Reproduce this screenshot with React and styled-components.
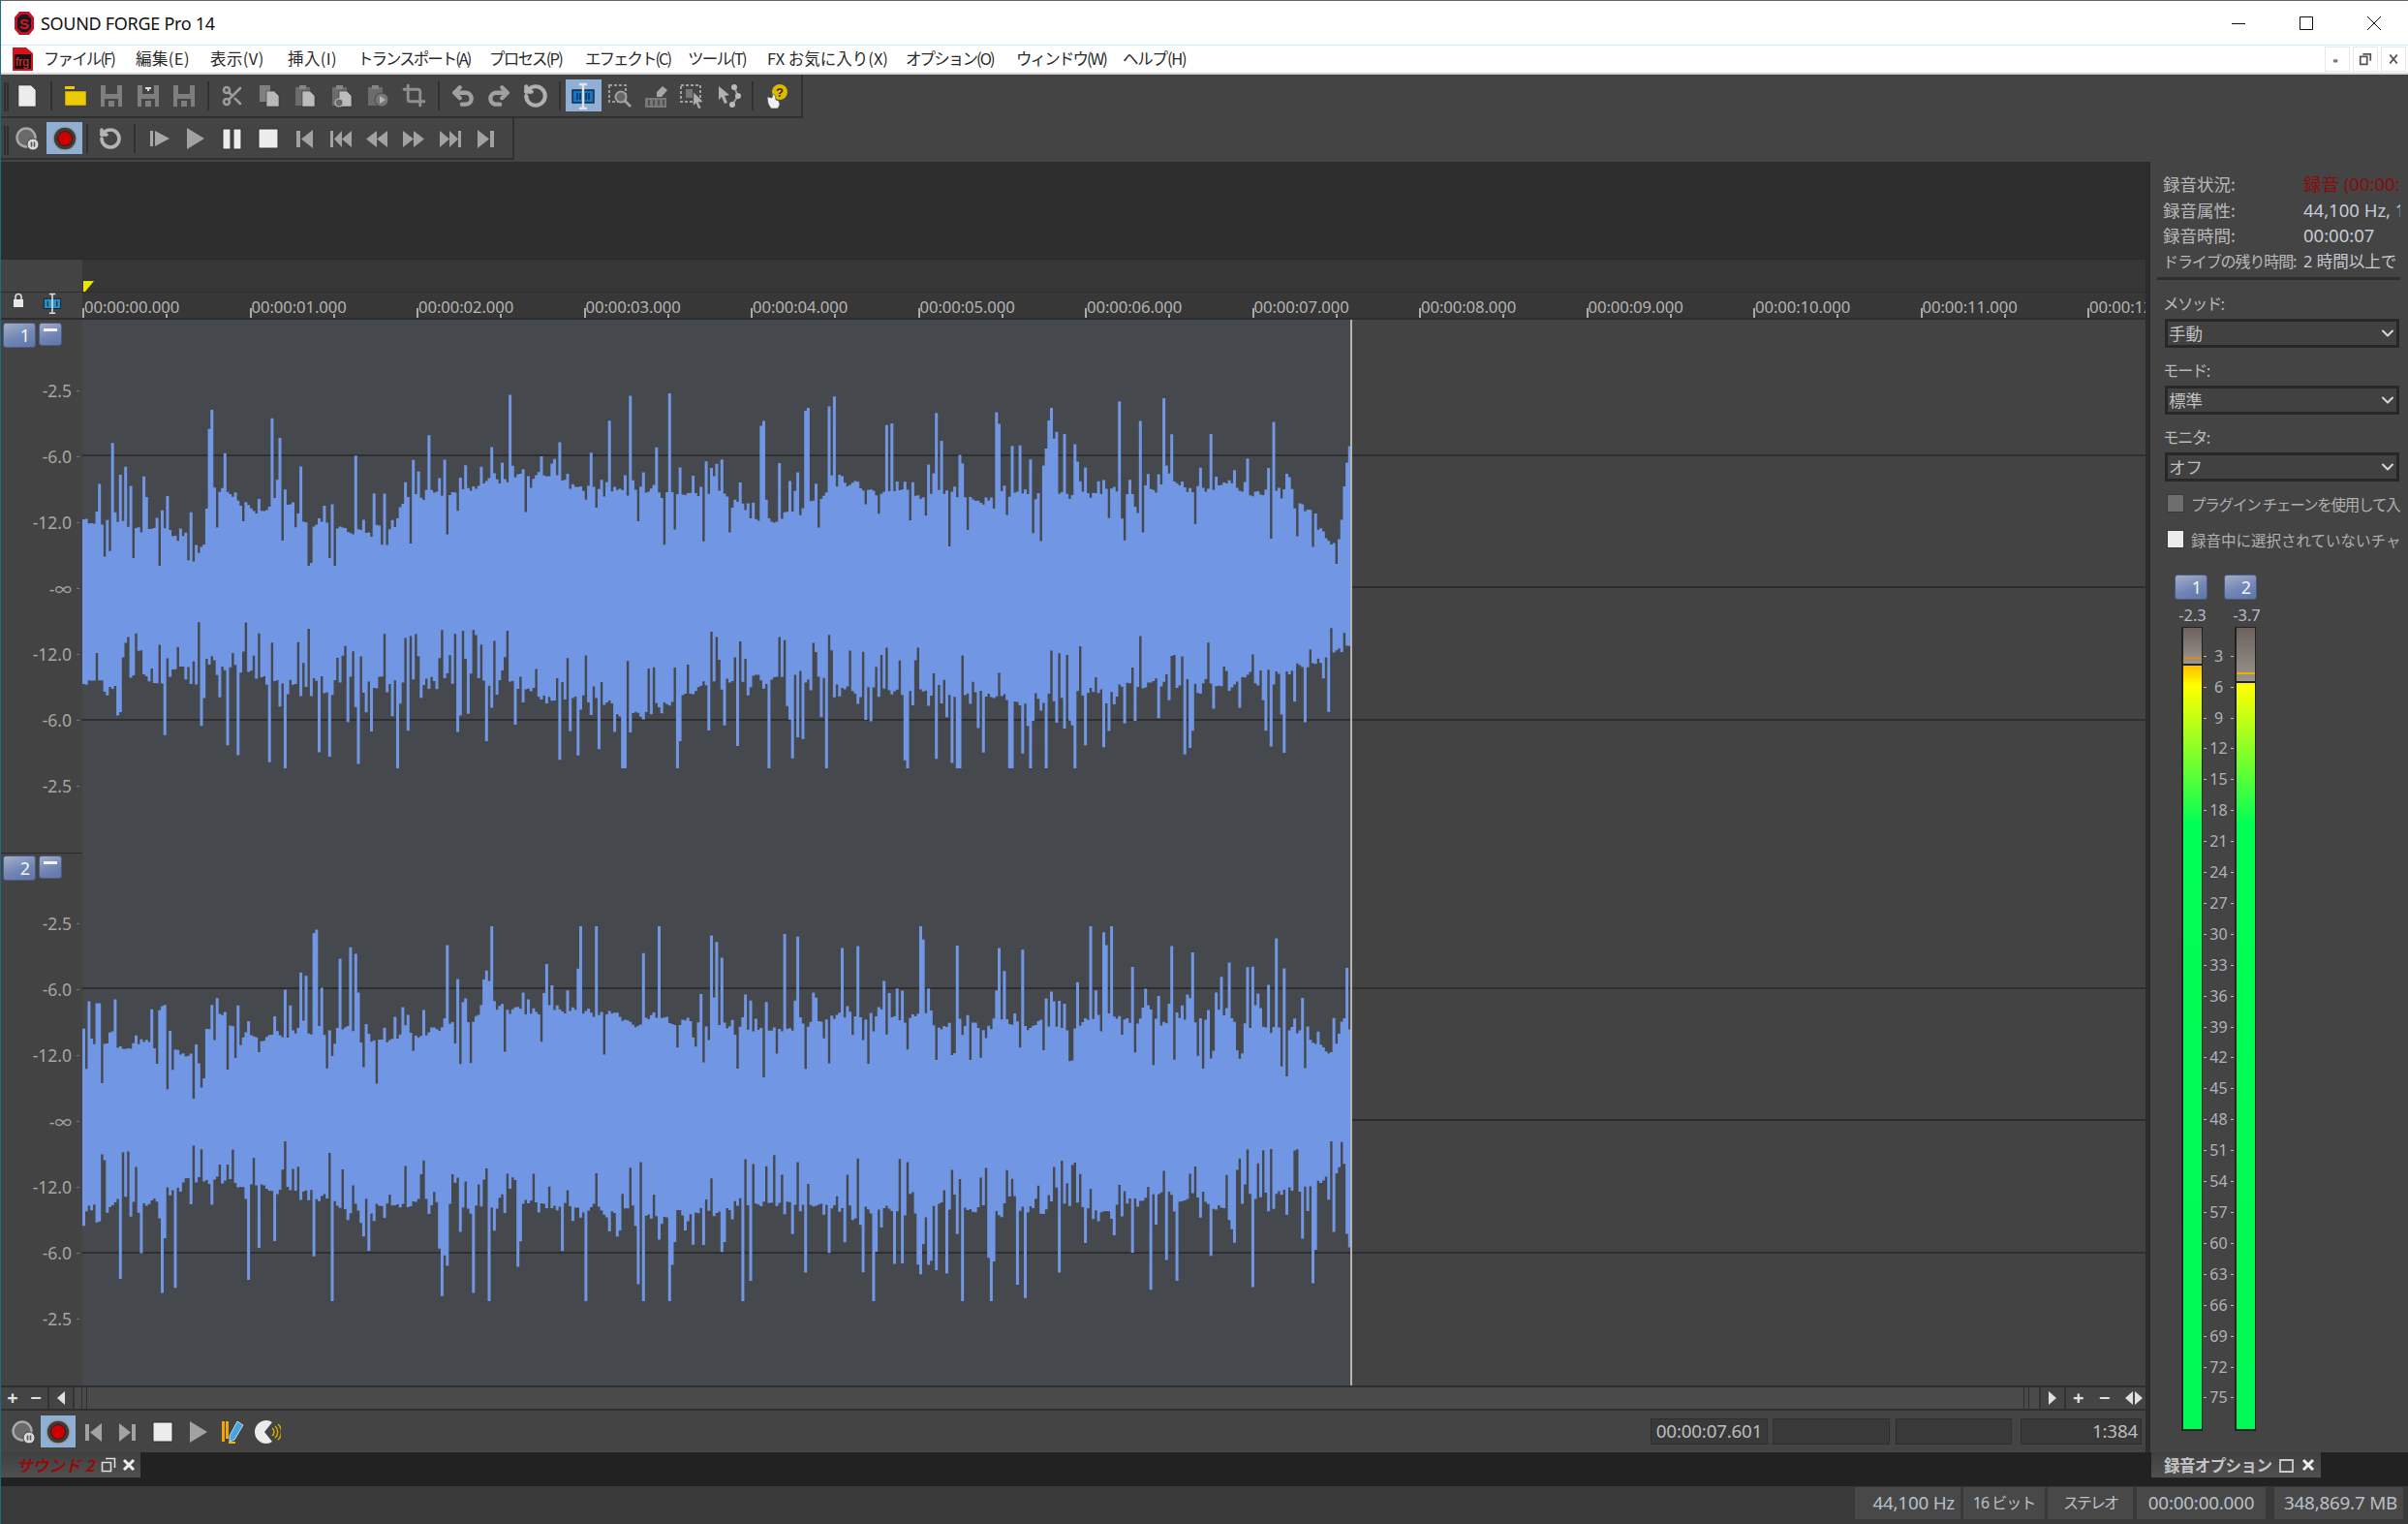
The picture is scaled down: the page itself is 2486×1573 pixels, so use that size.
import React, { useMemo } from "react";
import styled, { createGlobalStyle } from "styled-components";
import { Undo2, Redo2, RotateCcw, Crop, Scissors, ChevronDown } from "lucide-react";

const SANS = `"Noto Sans", "Noto Sans CJK JP", sans-serif`;
const JP = `"Noto Sans CJK JP", "Noto Sans", sans-serif`;

const GlobalStyle = createGlobalStyle`
  html, body { margin: 0; padding: 0; background: #444; }
  body { width: 2486px; height: 1573px; overflow: hidden; font-family: ${SANS}; }
  * { box-sizing: border-box; }
`;

const Window = styled.div`
  width: 2486px;
  height: 1573px;
  display: flex;
  flex-direction: column;
  border-left: 1px solid #1f6b86;
  background: #444;
  overflow: hidden;
`;

const TitleBar = styled.div`
  height: 47px;
  flex: none;
  background: #fff;
  border-top: 1px solid #666;
  border-bottom: 1px solid #cfe6f5;
  display: flex;
  align-items: center;
  padding-left: 12px;
  font: 18px ${SANS};
  color: #111;
`;

const TitleText = styled.span`
  margin-left: 5px;
  letter-spacing: -0.3px;
  flex: 1;
`;

const WinButton = styled.div`
  width: 70px;
  display: flex;
  justify-content: center;
`;

const WinControls = styled.div`
  display: flex;
`;

const MenuBar = styled.div`
  height: 30px;
  flex: none;
  background: #fff;
  border-bottom: 2px solid #d8d8d8;
  display: flex;
  align-items: center;
  padding-left: 12px;
`;

const MenuLogo = styled.div`
  width: 32px;
  flex: none;
`;

const MenuItem = styled.span`
  width: ${(p) => p.$w}px;
  flex: none;
  font: 16.5px ${JP};
  letter-spacing: ${(p) => p.$ls || 0}px;
  color: #2a2a2a;
  white-space: nowrap;
  padding-bottom: 2px;
`;

const MdiButtons = styled.div`
  margin-left: auto;
  display: flex;
  gap: 3px;
  padding-right: 2px;
`;

const MdiButton = styled.div`
  width: 26px;
  height: 26px;
  border: 1px solid #e8e8e8;
  display: flex;
  align-items: center;
  justify-content: center;
`;

const Toolbars = styled.div`
  height: 90px;
  flex: none;
  display: flex;
  flex-direction: column;
  background: #444;
`;

const ToolRow = styled.div`
  width: ${(p) => p.$w}px;
  height: ${(p) => p.$h}px;
  display: flex;
  align-items: center;
  border-right: 2px solid #303030;
  border-bottom: 2px solid #303030;
`;

const Grip = styled.div`
  width: 8.2px;
  height: 100%;
  flex: none;
  &::before {
    content: "";
    display: block;
    margin: 8px 0 0 6px;
    width: 2px;
    height: 30px;
    background: #2e2e2e;
    box-shadow: -3px 0 0 #2e2e2e;
  }
`;

const ToolButton = styled.div`
  width: 37.6px;
  height: 33px;
  flex: none;
  display: flex;
  align-items: center;
  justify-content: center;
  background: ${(p) => (p.$active ? "#8fb0d4" : "transparent")};
  margin-left: ${(p) => p.$ml || 0}px;
`;

const ToolSep = styled.div`
  width: ${(p) => p.$w || 12}px;
  height: 30px;
  flex: none;
  display: flex;
  justify-content: center;
  &::before {
    content: "";
    width: 2px;
    background: #303030;
  }
`;

const Workspace = styled.div`
  flex: 1;
  display: flex;
  min-height: 0;
`;

const Editor = styled.div`
  width: 2214px;
  flex: none;
  display: flex;
  flex-direction: column;
`;

const Divider = styled.div`
  width: 5px;
  flex: none;
  background: #2c2c2c;
`;

const TrackTop = styled.div`
  height: 100px;
  flex: none;
  background: #2e2e2e;
`;

const MarkerRow = styled.div`
  height: 35px;
  flex: none;
  display: flex;
  background: #363636;
  border-top: 1px solid #2a2a2a;
  border-bottom: 1px solid #2e2e2e;
`;

const CornerCell = styled.div`
  width: 84px;
  flex: none;
  background: #434343;
`;

const MarkerTrack = styled.div`
  flex: 1;
  display: flex;
  align-items: flex-end;
`;

const RulerRow = styled.div`
  height: 28px;
  flex: none;
  display: flex;
  background: #373737;
  border-bottom: 2px solid #2e2e2e;
`;

const RulerCorner = styled(CornerCell)`
  display: flex;
  align-items: flex-start;
  padding: 0 0 0 11px;
  gap: 17px;
`;

const Ruler = styled.div`
  flex: 1;
  min-width: 0;
  display: flex;
  overflow: hidden;
`;

const RulerCell = styled.div`
  flex: 0 0 172.5px;
  height: 100%;
  position: relative;
  padding: 4px 0 0 2px;
  font: 16.7px ${SANS};
  letter-spacing: -0.1px;
  color: #b4b4b4;
  line-height: 22px;
  white-space: nowrap;
  &::before, &::after {
    content: "";
    position: absolute;
    bottom: 0;
    width: 2px;
    background: #aaa;
  }
  &::before { left: 0; height: 10px; }
  &::after { left: 86px; height: 4px; }
  &:last-child {
    flex: 1 1 0;
    min-width: 0;
    overflow: hidden;
  }
`;

const Channels = styled.div`
  height: 1100px;
  flex: none;
  display: flex;
  flex-direction: column;
`;

const Channel = styled.div`
  height: 550px;
  flex: none;
  display: flex;
`;

const ChannelSide = styled.div`
  width: 84px;
  flex: none;
  background: #434343;
  display: flex;
  flex-direction: column;
`;

const ChannelHead = styled.div`
  height: 39px;
  flex: none;
  display: flex;
  padding: 2px 0 0 2px;
  gap: 3px;
  align-items: flex-start;
  border-top: 1px solid ${(p) => (p.$second ? "#2a2a2a" : "transparent")};
`;

const blueButton = `
  background: linear-gradient(160deg, #a3aec9 0%, #7286b6 55%, #5f74a8 100%);
  border: 1px solid #4e5b80;
  border-radius: 3px;
`;

const ChannelButton = styled.div`
  ${blueButton}
  width: 34px;
  height: 26px;
  color: #f2f4fa;
  font: 18px/24px ${SANS};
  text-align: right;
  padding-right: 5px;
`;

const MinusButton = styled.div`
  ${blueButton}
  width: 24px;
  height: 24px;
  padding: 5px 4px 0;
  &::before {
    content: "";
    display: block;
    height: 3px;
    background: #f4f4f4;
  }
`;

const DbRow = styled.div`
  height: 68px;
  flex: none;
  display: flex;
  align-items: center;
  justify-content: flex-end;
  padding-right: 3px;
  font: 17.5px ${SANS};
  color: #a8a6a0;
  &::after {
    content: "";
    width: 3px;
    height: 1px;
    background: #777;
    margin-left: 5px;
  }
`;

const WaveBox = styled.div`
  flex: 1;
  min-width: 0;
`;

const ScrollRow = styled.div`
  height: 26px;
  flex: none;
  display: flex;
  align-items: stretch;
  background: #4a4a4a;
  border-top: 2px solid #2f2f2f;
  border-bottom: 2px solid #2f2f2f;
`;

const ScrollCell = styled.div`
  width: ${(p) => p.$w}px;
  flex: none;
  display: flex;
  align-items: center;
  justify-content: ${(p) => (p.$spread ? "space-between" : "space-around")};
  padding: ${(p) => (p.$spread ? "0 3px 0 7px" : "0")};
  background: #444;
  border-right: ${(p) => (p.$right ? "none" : "2px solid #333")};
  border-left: ${(p) => (p.$right ? "2px solid #333" : "none")};
  color: #e0e0e0;
  font: bold 20px/1 ${SANS};
`;

const ScrollTrack = styled.div`
  flex: 1;
  display: flex;
  justify-content: space-between;
  padding: 0 10px 0 7px;
  &::before, &::after {
    content: "";
    width: 4px;
    border-left: 1px solid #2e2e2e;
    border-right: 1px solid #2e2e2e;
  }
`;

const TransportRow = styled.div`
  height: 43px;
  flex: none;
  display: flex;
  align-items: center;
  padding: 0 4px 0 5px;
  background: #444;
`;

const TransportButton = styled.div`
  width: 36px;
  height: 33px;
  flex: none;
  display: flex;
  align-items: center;
  justify-content: center;
  background: ${(p) => (p.$active ? "#8fb0d4" : "transparent")};
`;

const Fields = styled.div`
  margin-left: auto;
  display: flex;
`;

const Field = styled.div`
  width: ${(p) => p.$w}px;
  height: 27px;
  margin-left: ${(p) => p.$ml || 0}px;
  background: #393939;
  border: 1px solid #2f2f2f;
  font: 18.8px/25px ${SANS};
  color: #bdbdbd;
  text-align: ${(p) => (p.$left ? "center" : "right")};
  padding: 0 3px;
  letter-spacing: -0.2px;
  white-space: nowrap;
  overflow: hidden;
`;

const Panel = styled.div`
  flex: 1;
  min-width: 0;
  display: flex;
  flex-direction: column;
  padding: 9px 8px 0 7px;
  background: #444;
  color: #b9b9b9;
  font: 17.5px ${JP};
  overflow: hidden;
`;

const InfoRow = styled.div`
  height: 26.7px;
  flex: none;
  display: flex;
  align-items: center;
  padding-left: 6px;
  white-space: nowrap;
  overflow: hidden;
`;

const InfoLabel = styled.span`
  flex: none;
  width: ${(p) => p.$w || 145}px;
  font-size: ${(p) => p.$fs || 17.5}px;
  letter-spacing: ${(p) => p.$ls || 0}px;
`;

const InfoValue = styled.span`
  color: ${(p) => (p.$red ? "#8a0c0c" : "#c6ccd6")};
  font-family: ${SANS};
  font-size: ${(p) => p.$fs || 18.5}px;
`;

const PanelRule = styled.div`
  height: 3px;
  flex: none;
  margin-top: 3px;
  background: #2e2e2e;
`;

const FieldGroup = styled.div`
  flex: none;
  margin-top: ${(p) => p.$mt || 10}px;
`;

const FieldLabel = styled.div`
  height: 26px;
  padding: 0 6px;
  line-height: 26px;
  font-size: 16.5px;
  letter-spacing: -1.6px;
`;

const SelectBox = styled.div`
  height: 30px;
  margin: 3px 1px 0 8px;
  border: 3px solid #272727;
  background: #414141;
  display: flex;
  align-items: center;
  justify-content: space-between;
  padding: 0 0 0 1px;
  color: #c0c0c0;
  svg { margin-right: -1px; }
`;

const CheckRow = styled.div`
  height: 20px;
  flex: none;
  margin-top: ${(p) => p.$mt}px;
  padding-left: 10px;
  display: flex;
  align-items: center;
  gap: 7px;
  white-space: nowrap;
  font-size: 15.5px;
  letter-spacing: ${(p) => p.$ls || 0}px;
  color: #b0b0b0;
  overflow: hidden;
`;

const CheckBox = styled.div`
  width: 18px;
  height: 19px;
  flex: none;
  background: ${(p) => (p.$on ? "#ececec" : "#6e6e6e")};
  border: 1px solid #3a3a3a;
`;

const MeterButtons = styled.div`
  flex: none;
  display: flex;
  gap: 17px;
  margin: 26px 0 0 18px;
`;

const MeterValues = styled.div`
  flex: none;
  height: 28px;
  margin-left: 18px;
  padding-top: 4px;
  display: flex;
  gap: 19px;
  align-items: center;
`;

const MeterValue = styled.span`
  width: 37px;
  text-align: center;
  font: 16.5px ${SANS};
  color: #b4bcc8;
`;

const Meters = styled.div`
  flex: none;
  display: flex;
  margin-left: 25px;
`;

const Meter = styled.div`
  width: 22px;
  height: 830px;
  flex: none;
  display: flex;
  flex-direction: column;
  background: #222;
  padding: 1px 1px 2px 2px;
`;

const PeakHold = styled.div`
  height: ${(p) => p.$h}px;
  flex: none;
  background: linear-gradient(#6c615e, #9a968c);
  padding-top: ${(p) => p.$line}px;
  border-bottom: 2px solid #222;
  &::before {
    content: "";
    display: block;
    height: 2px;
    background: ${(p) => p.$color};
  }
`;

const MeterFill = styled.div`
  flex: 1;
  background: linear-gradient(
    to top,
    #00f954 0,
    #00ff55 624px,
    #ffff00 767px,
    #ffb400 791px
  );
`;

const MeterScale = styled.div`
  width: 33px;
  flex: none;
  padding-top: 14px;
  display: flex;
  flex-direction: column;
`;

const ScaleRow = styled.div`
  height: 31.92px;
  flex: none;
  display: flex;
  align-items: center;
  justify-content: center;
  font: 16px ${SANS};
  color: #b0b4ba;
  position: relative;
  &::before, &::after {
    content: "";
    position: absolute;
    top: 50%;
    width: 3px;
    height: 1px;
    background: #bbb;
  }
  &::before { left: 1px; }
  &::after { right: 1px; }
`;

const TabBar = styled.div`
  height: 35px;
  flex: none;
  background: #222;
  display: flex;
  align-items: flex-start;
  justify-content: space-between;
  padding-right: 90px;
`;

const Tab = styled.div`
  height: 26px;
  width: ${(p) => p.$w}px;
  background: linear-gradient(#404040, #505050);
  display: flex;
  align-items: center;
  gap: ${(p) => p.$gap}px;
  padding-left: ${(p) => p.$pl}px;
  white-space: nowrap;
`;

const TabName = styled.span`
  font: ${(p) => (p.$red ? "italic bold" : "bold")} 16.5px/26px ${JP};
  color: ${(p) => (p.$red ? "#960a0a" : "#c4c4c4")};
  letter-spacing: ${(p) => (p.$red ? 0.2 : -0.6)}px;
  flex: none;
`;

const StatusBar = styled.div`
  height: 39px;
  flex: none;
  background: #393939;
  display: flex;
  justify-content: flex-end;
  align-items: flex-start;
  padding: 1px 5px 0 0;
`;

const StatusCell = styled.div`
  width: ${(p) => p.$w}px;
  height: 33px;
  margin-left: ${(p) => p.$ml || 3}px;
  background: #484848;
  font: ${(p) => p.$fs || 18.8}px/33px ${SANS};
  color: #b9c0c8;
  text-align: ${(p) => (p.$center ? "center" : "right")};
  padding-right: ${(p) => (p.$center ? 0 : 6)}px;
  letter-spacing: ${(p) => p.$ls ?? -0.2}px;
  white-space: nowrap;
`;

// seeded random so the wave form stays the same between runs
const rng = (seed) => () => {
  seed = (seed + 0x6d2b79f5) | 0;
  let t = Math.imul(seed ^ (seed >>> 15), 1 | seed);
  t = (t + Math.imul(t ^ (t >>> 7), 61 | t)) ^ t;
  return ((t ^ (t >>> 14)) >>> 0) / 4294967296;
};

const lerp = (keys, x) => {
  for (let i = 1; i < keys.length; i++) {
    if (x <= keys[i][0]) {
      const [x0, y0] = keys[i - 1];
      const [x1, y1] = keys[i];
      return y0 + ((y1 - y0) * (x - x0)) / (x1 - x0);
    }
  }
  return keys[keys.length - 1][1];
};

// envelope keys read off the picture: [x, edge y]
const ENVELOPES = [
  {
    seed: 11,
    center: 382,
    up: [[54, 340], [90, 345], [125, 352], [131, 364], [135, 318], [170, 335], [182, 325], [200, 342], [235, 345], [252, 355], [262, 330], [300, 320], [340, 312], [380, 320], [420, 325], [470, 325], [500, 342], [540, 320], [600, 325], [650, 325], [700, 325], [750, 320], [800, 320], [840, 322], [866, 355], [872, 350], [877, 295]],
    down: [[54, 442], [100, 440], [130, 425], [170, 438], [220, 442], [300, 438], [380, 452], [420, 458], [470, 438], [550, 442], [600, 448], [650, 452], [700, 448], [750, 442], [800, 442], [860, 428], [877, 418]],
  },
  {
    seed: 29,
    center: 730,
    up: [[54, 682], [90, 682], [125, 690], [131, 718], [137, 665], [170, 678], [200, 672], [250, 682], [300, 668], [340, 662], [380, 662], [420, 668], [470, 672], [500, 678], [540, 664], [600, 668], [650, 672], [700, 672], [750, 668], [800, 668], [840, 672], [868, 692], [877, 645]],
    down: [[54, 784], [100, 780], [130, 762], [160, 772], [230, 782], [300, 782], [350, 782], [420, 788], [470, 786], [500, 778], [540, 786], [600, 786], [650, 786], [700, 782], [750, 778], [800, 782], [850, 772], [877, 756]],
  },
];

const K = 1.5855;
const WAVE_W = 1310;
const MID = 276;

const buildWave = ({ seed, center, up, down }) => {
  const r = rng(seed);
  const step = 2.7;
  let d = "";
  let drift = 0;
  for (let x = 0; x < WAVE_W - 1; x += step) {
    const px = (x + 85) / K;
    drift = drift * 0.7 + (r() - 0.5) * 10;
    const edge = (amp, limit, notchChance) => {
      let a = amp * 1.05 + drift;
      const roll = r();
      if (roll < 0.3) a += 8 + Math.pow(r(), 2) * 95;
      else if (roll < 0.3 + notchChance) a -= 10 + r() * 42;
      return Math.min(Math.max(a, 22), limit);
    };
    const top = edge((center - lerp(up, px)) * K, 200, 0.13);
    const bottom = edge((lerp(down, px) - center) * K, 187, 0.2);
    d += `M${x.toFixed(1)} ${(MID - top).toFixed(1)}h${(step + 0.3).toFixed(1)}V${(MID + bottom).toFixed(1)}h-${(step + 0.3).toFixed(1)}Z`;
  }
  return d;
};

const Wave = ({ index }) => {
  const d = useMemo(() => buildWave(ENVELOPES[index]), [index]);
  return (
    <svg width="2130" height="550" viewBox="0 0 2130 550" style={{ display: "block" }}>
      <rect width="2130" height="550" fill="#434343" />
      <rect width={WAVE_W} height="550" fill="#45484c" />
      {[139, 412].map((y) => (
        <rect key={y} y={y} width="2130" height="2" fill="#2f2f30" />
      ))}
      <rect x={WAVE_W} y={MID - 1} width="820" height="2" fill="#2c2c2c" />
      <path d={d} fill="#7096e4" />
      <rect x={WAVE_W - 1} width="2" height="550" fill="#b4b4b4" />
    </svg>
  );
};

const G = "#a2a2a2";
const W = "#ececec";

const Svg = ({ s = 28, children }) => (
  <svg width={s} height={s} viewBox="0 0 28 28">{children}</svg>
);

const Doc = ({ x = 0, y = 0, w = 14, h = 18, fill = W }) => (
  <path d={`M${x} ${y}h${w - 5}l5 5v${h - 5}h-${w}z`} fill={fill} stroke="#333" strokeWidth="0.6" />
);

const Floppy = ({ q }) => (
  <g>
    <path d="M3 3h22v22H3z" fill="#7e7e7e" />
    <path d="M8 3h12v9H8zM7 17h14v8H7z" fill="#444" />
    <path d="M11 19h6v6h-6z" fill="#7e7e7e" />
    {q && <path d="M11 5h6v2h-2v2h-2V7h-2z" fill="#ddd" />}
  </g>
);

const Clip = ({ children }) => (
  <g>
    <path d="M4 5h15v19H4z" fill="#6c6c6c" />
    <path d="M8 3h7v4H8z" fill="#868686" />
    {children}
  </g>
);

const ICONS = {
  newDoc: <Svg><Doc x={5} y={3} w={18} h={22} /></Svg>,
  open: (
    <Svg>
      <path d="M3 4h10v3H3z" fill="#eecb00" />
      <path d="M3 9h22v15H3z" fill="#eecb00" stroke="#3a3a3a" strokeWidth="0.5" />
    </Svg>
  ),
  save: <Svg><Floppy /></Svg>,
  saveAs: <Svg><Floppy q /></Svg>,
  cut: <Scissors size={24} color="#9c9c9c" strokeWidth={2.6} />,
  copy: (
    <Svg>
      <path d="M4 3h11v17H4z" fill="#808080" />
      <Doc x={11} y={9} w={13} h={16} fill="#b8b8b8" />
    </Svg>
  ),
  paste: <Svg><Clip><Doc x={11} y={9} w={13} h={16} fill="#bcbcbc" /></Clip></Svg>,
  pasteMix: (
    <Svg>
      <Clip><Doc x={11} y={9} w={13} h={16} fill="#bcbcbc" /></Clip>
      <circle cx="11" cy="21" r="4" fill="#666" stroke="#b8b8b8" strokeWidth="1.2" />
    </Svg>
  ),
  pastePlay: (
    <Svg>
      <Clip />
      <circle cx="18" cy="18" r="7" fill="#777" stroke="#444" />
      <path d="M16 14l6 4-6 4z" fill="#b4b4b4" />
    </Svg>
  ),
  crop: <Crop size={25} color="#8e8e8e" strokeWidth={2.8} />,
  undo: <Undo2 size={26} color="#a0a0a0" strokeWidth={4} />,
  redo: <Redo2 size={26} color="#a0a0a0" strokeWidth={4} />,
  undoAll: <RotateCcw size={26} color="#b0b0b0" strokeWidth={3.8} />,
  fit: (
    <Svg>
      <path d="M3 8h22v13H3z" fill="#1676c2" stroke="#0e2a44" strokeWidth="1.4" />
      <path d="M8 11v7M11 11v7M17 11v7M20 11v7" stroke="#0e2a44" strokeWidth="1.4" />
      <path d="M10 2h3l1 1 1-1h3M10 27h3l1-1 1 1h3M14 3v23" stroke="#e4e4e4" strokeWidth="2.4" fill="none" />
    </Svg>
  ),
  zoomSel: (
    <Svg>
      <path d="M3 3h17v17H3z" fill="none" stroke="#9c9c9c" strokeWidth="2" strokeDasharray="3 2" />
      <circle cx="15" cy="15" r="5.500" fill="#666" stroke="#a0a0a0" strokeWidth="2" />
      <path d="M19 19l6 6" stroke="#a0a0a0" strokeWidth="2.600" />
    </Svg>
  ),
  eraseBars: (
    <Svg>
      <path d="M3 16h22v10H3z" fill="#777" />
      <path d="M7 18v6M12 18v6M17 18v6M22 18v6" stroke="#444" strokeWidth="1.500" />
      <path d="M15 10l6-6 5 4-6 7h-5z" fill="#a6a6a6" />
    </Svg>
  ),
  selCursor: (
    <Svg>
      <path d="M2 3h20v17H2z" fill="none" stroke="#a0a0a0" strokeWidth="2" strokeDasharray="3 2" />
      <path d="M7 7h7v9H7z" fill="#777" />
      <path d="M15 10l10 10-5 .5 3 6-3 1-2.500-6-3 3z" fill="#b0b0b0" stroke="#444" strokeWidth="0.6" />
    </Svg>
  ),
  nodes: (
    <Svg>
      <path d="M3 4l11 9-5 1 3 7-3 1-3-7-3 3z" fill="#b0b0b0" />
      <path d="M19 5l4 9-6 9" fill="none" stroke="#9a9a9a" strokeWidth="2" />
      <circle cx="19" cy="5" r="3" fill="#bbb" />
      <circle cx="23" cy="14" r="3" fill="#bbb" />
      <circle cx="17" cy="23" r="3" fill="#bbb" />
    </Svg>
  ),
  help: (
    <Svg>
      <circle cx="17" cy="10" r="8" fill="#e0b800" />
      <text x="17" y="15" fontSize="13" fontWeight="700" textAnchor="middle" fill="#3a3000" fontFamily="Liberation Sans, sans-serif">?</text>
      <path d="M4 15l5 1 1-4 2 1 1 5 3 1 1 4-2 4H8l-3-5z" fill="#efefef" stroke="#444" strokeWidth="0.6" />
    </Svg>
  ),
  recPause: (
    <Svg>
      <circle cx="13" cy="13" r="9.500" fill="#6a6a6a" stroke="#a8a8a8" strokeWidth="2.400" />
      <circle cx="20" cy="20" r="6" fill="#d8d8d8" stroke="#444" strokeWidth="1" />
      <path d="M17.700 17.500h1.600v5h-1.600zM20.700 17.500h1.600v5h-1.600z" fill="#555" />
    </Svg>
  ),
  record: (
    <Svg>
      <circle cx="14" cy="14" r="12" fill="#3c3c3c" stroke="#9c9c9c" strokeWidth="1.500" />
      <circle cx="14" cy="14" r="7.500" fill="#cc0000" stroke="#111" strokeWidth="0.6" />
    </Svg>
  ),
  loop: <RotateCcw size={24} color="#b4b4b4" strokeWidth={3.6} />,
  playFrom: (
    <Svg>
      <path d="M5 6h3v16H5z" fill="#a8a8a8" />
      <path d="M10 6l15 8-15 8z" fill="#a8a8a8" />
    </Svg>
  ),
  play: <Svg><path d="M6 3l18 11L6 25z" fill={G} /></Svg>,
  pause: <Svg><path d="M5 4h8v21H5zM16 4h8v21h-8z" fill={W} stroke="#2e2e2e" /></Svg>,
  stop: <Svg><path d="M4 4h20v20H4z" fill={W} stroke="#2e2e2e" /></Svg>,
  first: <Svg><path d="M6 6h4v17H6zM23 5v19L11 14.500z" fill={G} /></Svg>,
  rewStart: <Svg><path d="M3 6h3v17H3zM15 6v17L7 14.500zM25 6v17L15 14.500z" fill={G} /></Svg>,
  rewind: <Svg><path d="M14 6v17L3 14.500zM25 6v17L14 14.500z" fill={G} /></Svg>,
  forward: <Svg><path d="M3 6v17l11-8.500zM14 6v17l11-8.500z" fill={G} /></Svg>,
  fwdEnd: <Svg><path d="M3 6v17l10-8.500zM13 6v17l9-8.500zM22 6h3v17h-3z" fill={G} /></Svg>,
  last: <Svg><path d="M5 5v19l12-9.500zM18 6h4v17h-4z" fill={G} /></Svg>,
  marker: (
    <Svg>
      <path d="M3 3h3v21H3zM7 3h3v18H7z" fill="#f1a500" />
      <path d="M19 3l6 4-9 15-5 2 0-6z" fill="#48a4e0" stroke="#eee" strokeWidth="0.8" />
      <path d="M10 24h7v2h-7z" fill="#e0c000" />
    </Svg>
  ),
  speaker: (
    <Svg>
      <path d="M13 2a12 12 0 1 0 0 24a12 12 0 0 0 6-2L11 14l8-10a12 12 0 0 0-6-2z" fill="#ececec" />
      <path d="M19 10a5 5 0 0 1 0 8M22 8a8 8 0 0 1 0 12M25 6a11 11 0 0 1 0 16" fill="none" stroke="#d8b400" strokeWidth="1.400" />
    </Svg>
  ),
};

const Icon = ({ name, active, ml }) => (
  <ToolButton $active={active} $ml={ml}>{ICONS[name]}</ToolButton>
);

const MENU = [
  ["ファイル(F)", 95, -1.9],
  ["編集(E)", 77, 0.4],
  ["表示(V)", 80, 0.4],
  ["挿入(I)", 72, 0.4],
  ["トランスポート(A)", 136, -2],
  ["プロセス(P)", 99, -1.8],
  ["エフェクト(C)", 106, -2],
  ["ツール(T)", 82, -1.8],
  ["FX お気に入り(X)", 143, 0],
  ["オプション(O)", 114, -1.9],
  ["ウィンドウ(W)", 110, -1.9],
  ["ヘルプ(H)", 70, -1.2],
];

// the last label only shows its first characters in the picture
const TIMES = Array.from({ length: 13 }, (_, i) => `00:00:${String(i).padStart(2, "0")}${i < 12 ? ".000" : ""}`);
const DB = ["-2.5", "-6.0", "-12.0", "-∞", "-12.0", "-6.0", "-2.5"];
const LEVELS = Array.from({ length: 25 }, (_, i) => (i + 1) * 3);

const Logo = () => (
  <svg width="24" height="24" viewBox="0 0 24 24">
    <path d="M7 0h10l5 6v12l-5 6H7l-5-6V6z" fill="#c4102a" />
    <path d="M9 3h6l4 4v10l-4 4H9l-4-4V7z" fill="#1a1a1a" />
    <text x="12" y="18" fontSize="15" fontWeight="700" textAnchor="middle" fill="#d8142c" fontFamily="Liberation Sans, sans-serif">S</text>
  </svg>
);

const MenuIcon = () => (
  <svg width="21" height="24" viewBox="0 0 21 24" style={{ display: "block" }}>
    <path d="M0 0h14l7 6v18H0z" fill="#d4121e" />
    <path d="M2 7h17v15H2z" fill="#1a1010" />
    <text x="10" y="19" fontSize="12" textAnchor="middle" fill="#e03030" fontFamily="Liberation Sans, sans-serif">frg</text>
  </svg>
);

const Glyph = ({ d, stroke = "#111", w = 16, fill = "none", sw = 1 }) => (
  <svg width={w} height={w} viewBox="0 0 16 16">
    <path d={d} fill={fill} stroke={stroke} strokeWidth={sw} />
  </svg>
);

const Method = ({ label, value, mt }) => (
  <FieldGroup $mt={mt}>
    <FieldLabel>{label}</FieldLabel>
    <SelectBox>
      {value}
      <ChevronDown size={20} color="#d8d8d8" strokeWidth={2.4} />
    </SelectBox>
  </FieldGroup>
);

export default function App() {
  return (
    <Window>
      <GlobalStyle />
      <TitleBar>
        <Logo />
        <TitleText>SOUND FORGE Pro 14</TitleText>
        <WinControls>
          <WinButton><Glyph d="M1 8.500h14" /></WinButton>
          <WinButton><Glyph d="M1.500 1.500h13v13h-13z" /></WinButton>
          <WinButton><Glyph d="M1 1l14 14M15 1L1 15" /></WinButton>
        </WinControls>
      </TitleBar>
      <MenuBar>
        <MenuLogo><MenuIcon /></MenuLogo>
        {MENU.map(([t, w, ls]) => (
          <MenuItem key={t} $w={w} $ls={ls}>{t}</MenuItem>
        ))}
        <MdiButtons>
          <MdiButton><Glyph w={10} d="M2 9h6v4H2z" stroke="#777" fill="#777" /></MdiButton>
          <MdiButton><Glyph w={14} d="M5 2h9v8M2 5h8v9H2z" stroke="#555" sw={2} /></MdiButton>
          <MdiButton><Glyph w={12} d="M3 2l10 12M13 2L3 14" stroke="#555" sw={2.6} /></MdiButton>
        </MdiButtons>
      </MenuBar>
      <Toolbars>
        <ToolRow $w={828} $h={45}>
          <Grip />
          <Icon name="newDoc" />
          <ToolSep />
          <Icon name="open" />
          <Icon name="save" />
          <Icon name="saveAs" />
          <Icon name="save" />
          <ToolSep />
          <Icon name="cut" />
          <Icon name="copy" />
          <Icon name="paste" />
          <Icon name="pasteMix" />
          <Icon name="pastePlay" />
          <Icon name="crop" />
          <ToolSep />
          <Icon name="undo" />
          <Icon name="redo" />
          <Icon name="undoAll" />
          <ToolSep />
          <Icon name="fit" active />
          <Icon name="zoomSel" />
          <Icon name="eraseBars" />
          <Icon name="selCursor" />
          <Icon name="nodes" />
          <ToolSep />
          <Icon name="help" />
        </ToolRow>
        <ToolRow $w={530} $h={43}>
          <Grip />
          <Icon name="recPause" />
          <Icon name="record" active ml={1} />
          <ToolSep $w={10} />
          <Icon name="loop" />
          <ToolSep />
          <Icon name="playFrom" />
          <Icon name="play" />
          <Icon name="pause" />
          <Icon name="stop" />
          <Icon name="first" />
          <Icon name="rewStart" />
          <Icon name="rewind" />
          <Icon name="forward" />
          <Icon name="fwdEnd" />
          <Icon name="last" />
        </ToolRow>
      </Toolbars>
      <Workspace>
        <Editor>
          <TrackTop />
          <MarkerRow>
            <CornerCell />
            <MarkerTrack>
              <svg width="12" height="12" viewBox="0 0 12 12" style={{ display: "block" }}>
                <path d="M1 1h11L3 12H1z" fill="#e8e800" />
              </svg>
            </MarkerTrack>
          </MarkerRow>
          <RulerRow>
            <RulerCorner>
              <svg width="14" height="16" viewBox="0 0 14 16">
                <path d="M4 7V4.500a3 3 0 0 1 6 0V7" fill="none" stroke="#e0e0e0" strokeWidth="1.600" />
                <path d="M2 7h10v8H2z" fill="#e8e8e8" />
              </svg>
              <svg width="22" height="22" viewBox="0 0 28 28">
                <path d="M3 8h22v13H3z" fill="#2a90c8" stroke="#123" strokeWidth="1.200" />
                <path d="M8 11v7M20 11v7" stroke="#123" strokeWidth="1.400" />
                <path d="M10 2h8M10 27h8M14 2v25" stroke="#ddd" strokeWidth="2" fill="none" />
              </svg>
            </RulerCorner>
            <Ruler>
              {TIMES.map((t) => <RulerCell key={t}>{t}</RulerCell>)}
            </Ruler>
          </RulerRow>
          <Channels>
            {[0, 1].map((i) => (
              <Channel key={i}>
                <ChannelSide>
                  <ChannelHead $second={i === 1}>
                    <ChannelButton>{i + 1}</ChannelButton>
                    <MinusButton />
                  </ChannelHead>
                  {DB.map((v, n) => <DbRow key={n}>{v}</DbRow>)}
                </ChannelSide>
                <WaveBox><Wave index={i} /></WaveBox>
              </Channel>
            ))}
          </Channels>
          <ScrollRow>
            <ScrollCell $w={50}><span>+</span><span>−</span></ScrollCell>
            <ScrollCell $w={26}>
              <svg width="8" height="14" viewBox="0 0 8 14"><path d="M8 0v14L0 7z" fill="#e0e0e0" /></svg>
            </ScrollCell>
            <ScrollTrack />
            <ScrollCell $w={26} $right>
              <svg width="8" height="14" viewBox="0 0 8 14"><path d="M0 0v14l8-7z" fill="#e0e0e0" /></svg>
            </ScrollCell>
            <ScrollCell $w={84} $right $spread>
              <span>+</span><span>−</span>
              <svg width="18" height="14" viewBox="0 0 18 14"><path d="M8 0v14L0 7zM10 0v14l8-7z" fill="#e0e0e0" /></svg>
            </ScrollCell>
          </ScrollRow>
          <TransportRow>
            <TransportButton>{ICONS.recPause}</TransportButton>
            <TransportButton $active>{ICONS.record}</TransportButton>
            <TransportButton>{ICONS.first}</TransportButton>
            <TransportButton>{ICONS.last}</TransportButton>
            <TransportButton>{ICONS.stop}</TransportButton>
            <TransportButton>{ICONS.play}</TransportButton>
            <TransportButton>{ICONS.marker}</TransportButton>
            <TransportButton>{ICONS.speaker}</TransportButton>
            <Fields>
              <Field $w={121} $left>00:00:07.601</Field>
              <Field $w={121} $ml={5} />
              <Field $w={120} $ml={6} />
              <Field $w={125} $ml={9}>1:384</Field>
            </Fields>
          </TransportRow>
        </Editor>
        <Divider />
        <Panel>
          <InfoRow>
            <InfoLabel>録音状況:</InfoLabel>
            <InfoValue $red>録音 (00:00:</InfoValue>
          </InfoRow>
          <InfoRow>
            <InfoLabel>録音属性:</InfoLabel>
            <InfoValue>44,100 Hz, 16</InfoValue>
          </InfoRow>
          <InfoRow>
            <InfoLabel>録音時間:</InfoLabel>
            <InfoValue>00:00:07</InfoValue>
          </InfoRow>
          <InfoRow>
            <InfoLabel $fs={16} $ls={-1.1}>ドライブの残り時間:</InfoLabel>
            <InfoValue $fs={16.5}>2 時間以上で</InfoValue>
          </InfoRow>
          <PanelRule />
          <Method label="メソッド:" value="手動" mt={11} />
          <Method label="モード:" value="標準" />
          <Method label="モニタ:" value="オフ" />
          <CheckRow $mt={13} $ls={-1.2}>
            <CheckBox />
            プラグイン チェーンを使用して入力を録音
          </CheckRow>
          <CheckRow $mt={17}>
            <CheckBox $on />
            録音中に選択されていないチャンネルをモニタ
          </CheckRow>
          <MeterButtons>
            <ChannelButton>1</ChannelButton>
            <ChannelButton>2</ChannelButton>
          </MeterButtons>
          <MeterValues>
            <MeterValue>-2.3</MeterValue>
            <MeterValue>-3.7</MeterValue>
          </MeterValues>
          <Meters>
            <Meter>
              <PeakHold $h={39} $line={30} $color="#d88a20" />
              <MeterFill />
            </Meter>
            <MeterScale>
              {LEVELS.map((l) => <ScaleRow key={l}>{l}</ScaleRow>)}
            </MeterScale>
            <Meter>
              <PeakHold $h={57} $line={46} $color="#f0b000" />
              <MeterFill />
            </Meter>
          </Meters>
        </Panel>
      </Workspace>
      <TabBar>
        <Tab $w={144} $pl={16} $gap={6}>
          <TabName $red>サウンド 2</TabName>
          <svg width="16" height="16" viewBox="0 0 16 16">
            <path d="M5 1.500h9.500V11M1.500 5.500h9v9h-9z" fill="none" stroke="#ddd" strokeWidth="1.600" />
          </svg>
          <svg width="14" height="14" viewBox="0 0 14 14">
            <path d="M2 2l10 10M12 2L2 12" stroke="#eee" strokeWidth="3" />
          </svg>
        </Tab>
        <Tab $w={175} $pl={13} $gap={8}>
          <TabName>録音オプション</TabName>
          <svg width="15" height="15" viewBox="0 0 15 15">
            <path d="M1 2h13v12H1z" fill="none" stroke="#ccc" strokeWidth="1.800" />
          </svg>
          <svg width="14" height="14" viewBox="0 0 14 14">
            <path d="M2 2l10 10M12 2L2 12" stroke="#eee" strokeWidth="3" />
          </svg>
        </Tab>
      </TabBar>
      <StatusBar>
        <StatusCell $w={109}>44,100 Hz</StatusCell>
        <StatusCell $w={84} $center $fs={16} $ls={-1}>16 ビット</StatusCell>
        <StatusCell $w={88} $center $fs={16} $ls={-2}>ステレオ</StatusCell>
        <StatusCell $w={133} $ml={4} $center>00:00:00.000</StatusCell>
        <StatusCell $w={133} $ml={9}>348,869.7 MB</StatusCell>
      </StatusBar>
    </Window>
  );
}
